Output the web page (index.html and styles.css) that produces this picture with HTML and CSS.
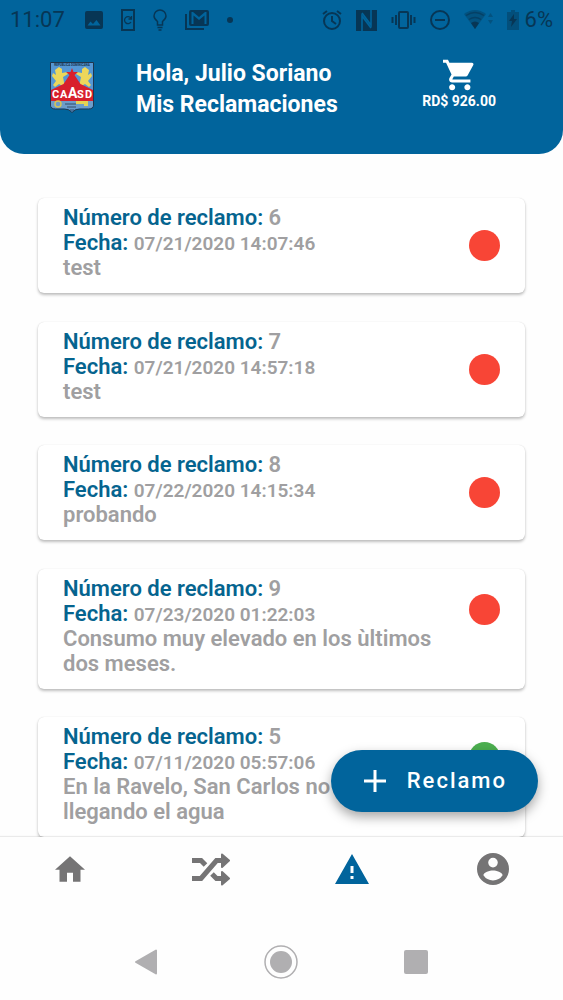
FILE: index.html
```html
<!DOCTYPE html>
<html lang="es">
<head>
<meta charset="utf-8">
<meta name="viewport" content="width=device-width, initial-scale=1">
<title>Mis Reclamaciones</title>
<link rel="stylesheet" href="styles.css">
</head>
<body>
<div class="app">
  <header class="header">
    <div class="status">
      <span class="status-text">11:07</span>
      <div class="status-icons status-left">
        <svg width="18" height="18" viewBox="0 0 18 18"><path fill="currentColor" fill-rule="evenodd" d="M2 0h14q2 0 2 2v14q0 2-2 2H2q-2 0-2-2V2Q0 0 2 0zM2.500 14.500h13L11.500 9l-3.500 4-2.500-2.500z"/></svg>
        <svg width="14" height="22" viewBox="0 0 14 22" fill="none" stroke="currentColor"><path stroke-width="2" d="M1 1h12v20H1z"/><path stroke-width="1.300" d="M9.800 9A3.500 3.500 0 1 0 10 13M10.500 7v3h-3"/></svg>
        <svg width="14" height="22" viewBox="0 0 14 22" fill="none" stroke="currentColor" stroke-width="1.500"><path d="M4.500 16v-3.500C2 10.500 1 9 1 7a6 6 0 0 1 12 0c0 2-1 3.500-3.500 5.500V16zM4.500 18.500h5M5.500 21h3"/></svg>
        <svg width="24" height="20" viewBox="0 0 24 20"><path fill="none" stroke="currentColor" stroke-width="2" d="M1 4v15h18"/><path fill="currentColor" fill-rule="evenodd" d="M6 0h16q2 0 2 2v12q0 2-2 2H6q-2 0-2-2V2Q4 0 6 0zM6.500 14h2V5.500L14 10l5.500-4.500V14h2V2H20l-6 5-6-5H6.500z"/></svg>
        <svg width="6" height="6" viewBox="0 0 6 6"><circle cx="3" cy="3" r="3" fill="currentColor"/></svg>
      </div>
      <div class="status-icons status-right">
        <svg width="20" height="20" viewBox="0 0 20 20" fill="none" stroke="currentColor" stroke-width="2"><circle cx="10" cy="11" r="8"/><path d="M1 4l4-3M19 4l-4-3M10 6v5l4 3"/></svg>
        <svg width="21" height="21" viewBox="0 0 21 21"><path fill="currentColor" d="M0 0h21v21H0z"/><path class="nfc-line" fill="none" stroke-width="1.600" d="M6 21V6l9 12M15 0v15L6 3"/></svg>
        <svg width="25" height="18" viewBox="0 0 25 18" fill="none" stroke="currentColor" stroke-width="2"><rect x="8" y="1" width="9" height="16" rx="1"/><path d="M5 4v10M1.500 6v6M20 4v10M23.500 6v6"/></svg>
        <svg width="20" height="20" viewBox="0 0 20 20" fill="none" stroke="currentColor" stroke-width="2"><circle cx="10" cy="10" r="9"/><path d="M5 10h10"/></svg>
        <svg width="29" height="20" viewBox="0 0 29 20" fill="currentColor"><path opacity=".4" d="M0 4q11-8 22 0L11 19z"/><path d="M7 13q4-3 8 0l-4 6z"/><path fill="none" stroke="currentColor" opacity=".6" stroke-width="1.500" d="M2 5.500q9-6 18 0M5 9.500q6-4 12 0"/><path opacity=".4" d="M24 7l2.500-4L29 7zM24 10h5l-2.500 4z"/></svg>
        <svg width="12" height="20" viewBox="0 0 12 20"><path fill="currentColor" opacity=".45" d="M0 2h4V0h4v2h4v18H0z"/><path fill="currentColor" d="M7 4l-5 7h3l-1 6 6-8H7z"/></svg>
      </div>
      <span class="status-text">6%</span>
    </div>
    <div class="hero">
      <svg class="crest" viewBox="0 0 44 51" role="img" aria-label="CAASD">
        <path fill="#5597d5" stroke="#20364d" d="M.5.500h43V43q0 4-5 4h-9q-5 0-7.500 3.500Q19.500 47 14.500 47h-9q-5 0-5-4z"/>
        <path fill="#ecd75b" d="M5 8l4-3 3 2v4l5-1 1 2-5 3 1 5 1 3-1 2-5-3-4 3-2-2 3-4-4-5 1-3 3 2zM39 8l-4-3-3 2v4l-5-1-1 2 5 3-1 5-1 3 1 2 5-3 4 3 2-2-3-4 4-5-1-3-3 2z"/>
        <path fill="#d8202c" d="M22 6l1.500 4H28l-3.500 3 6 9 12.500 6v11H1V28l12.500-6 6-9L16 10h4.500z"/>
        <path fill="#6d9dca" d="M1 39h42v4q0 3-5 3h-9q-5 0-7 3-2-3-7-3H6q-5 0-5-3z"/>
        <circle cx="8" cy="42" r="3" fill="none" stroke="#d6c457" stroke-width="1.500"/>
        <path fill="#e4d353" d="M26 39h12v5h-4v-2h-8z"/>
        <path stroke="#334c69" d="M15 42h11M17 45h9M20 48h4"/>
        <text class="crest-country" x="22" y="4" text-anchor="middle">REPUBLICA DOMINICANA</text>
        <text class="crest-name" y="36"><tspan x="2">C</tspan><tspan x="10">A</tspan><tspan class="crest-mid" x="18">A</tspan><tspan x="27">S</tspan><tspan x="35">D</tspan></text>
      </svg>
      <h1 class="greeting">Hola, Julio Soriano<br>Mis Reclamaciones</h1>
      <button class="cart" type="button">
        <svg class="cart-icon" viewBox="1 2 21 20" fill="currentColor" aria-hidden="true"><path d="M7 18c-1.100 0-1.990.9-1.990 2S5.900 22 7 22s2-.9 2-2-.9-2-2-2zM1 2v2h2l3.600 7.590-1.350 2.450c-.16.280-.25.610-.25.960 0 1.100.9 2 2 2h12v-2H7.420c-.14 0-.25-.11-.25-.25l.03-.12.900-1.630h7.450c.75 0 1.410-.41 1.750-1.030l3.580-6.490A1 1 0 0 0 20 4H5.210l-.94-2zm16 16c-1.100 0-1.990.9-1.990 2s.89 2 1.990 2 2-.9 2-2-.9-2-2-2z"/></svg>
        <span>RD$ 926.00</span>
      </button>
    </div>
  </header>

  <main class="claims">
    <article class="card">
      <div class="card-text"><p><b>Número de reclamo:</b> 6</p><p><b>Fecha:</b> <time>07/21/2020 14:07:46</time></p><p>test</p></div>
      <span class="dot"></span>
    </article>
    <article class="card">
      <div class="card-text"><p><b>Número de reclamo:</b> 7</p><p><b>Fecha:</b> <time>07/21/2020 14:57:18</time></p><p>test</p></div>
      <span class="dot"></span>
    </article>
    <article class="card">
      <div class="card-text"><p><b>Número de reclamo:</b> 8</p><p><b>Fecha:</b> <time>07/22/2020 14:15:34</time></p><p>probando</p></div>
      <span class="dot"></span>
    </article>
    <article class="card card-tall">
      <div class="card-text"><p><b>Número de reclamo:</b> 9</p><p><b>Fecha:</b> <time>07/23/2020 01:22:03</time></p><p>Consumo muy elevado en los ùltimos dos meses.</p></div>
      <span class="dot"></span>
    </article>
    <article class="card card-tall">
      <div class="card-text"><p><b>Número de reclamo:</b> 5</p><p><b>Fecha:</b> <time>07/11/2020 05:57:06</time></p><p>En la Ravelo, San Carlos no esta llegando el agua</p></div>
      <span class="dot dot-green"></span>
    </article>
    <button class="fab" type="button">
      <svg width="22" height="22" viewBox="0 0 22 22" aria-hidden="true"><path stroke="currentColor" stroke-width="3" d="M11 0v22M0 11h22"/></svg>
      <span>Reclamo</span>
    </button>
  </main>

  <nav class="tabs">
    <a class="tab" href="#inicio" aria-label="Inicio"><svg width="30" height="26" viewBox="2 3 20 17" fill="currentColor"><path d="M10 20v-6h4v6h5v-8h3L12 3 2 12h3v8z"/></svg></a>
    <a class="tab" href="#movimientos" aria-label="Movimientos"><svg width="38" height="33" viewBox="0 0 38 33" fill="none" stroke="currentColor" stroke-width="5"><path d="M0 7.500h9l4.500 4.500M20 21l4.500 4.500H30M0 25.500h9L24.500 7.500H30"/><path fill="currentColor" stroke-width="2" stroke-linejoin="round" d="M30 1.500l7 6-7 6.500zM30 19l7 6.500-7 6z"/></svg></a>
    <a class="tab tab-active" href="#reclamos" aria-label="Reclamaciones" aria-current="page"><svg width="34" height="30" viewBox="0 0 34 30" fill="currentColor"><path fill-rule="evenodd" d="M17 0l17 30H0zM15.500 12v7h3v-7zM15.500 22v3h3v-3z"/></svg></a>
    <a class="tab" href="#perfil" aria-label="Perfil"><svg width="32" height="32" viewBox="2 2 20 20" fill="currentColor"><path fill-rule="evenodd" d="M12 2a10 10 0 1 0 0 20 10 10 0 0 0 0-20zm0 3a3 3 0 1 1 0 6 3 3 0 0 1 0-6zm0 14.200a7.200 7.200 0 0 1-6-3.220c.03-1.990 4-3.080 6-3.080s5.970 1.090 6 3.080a7.200 7.200 0 0 1-6 3.220z"/></svg></a>
  </nav>

  <div class="system">
    <button class="key" type="button" aria-label="Atrás"><svg width="22" height="26" viewBox="0 0 22 26"><path fill="currentColor" stroke="currentColor" stroke-width="2" stroke-linejoin="round" d="M21 1.500v23L1 13z"/></svg></button>
    <button class="key" type="button" aria-label="Inicio del teléfono"><svg width="34" height="34" viewBox="0 0 34 34"><circle cx="17" cy="17" r="16" fill="none" stroke="currentColor" stroke-width="1.500"/><circle cx="17" cy="17" r="11" fill="currentColor"/></svg></button>
    <button class="key" type="button" aria-label="Recientes"><svg width="24" height="24" viewBox="0 0 24 24"><rect width="24" height="24" rx="2" fill="currentColor"/></svg></button>
  </div>
</div>
</body>
</html>
```

FILE: styles.css
```css
* { box-sizing: border-box; }
body {
  margin: 0;
  background: #fefefe;
  font-family: Roboto, "Liberation Sans", sans-serif;
}
h1, p { margin: 0; }
button {
  border: 0;
  padding: 0;
  background: none;
  font: inherit;
  color: inherit;
}
svg { display: block; flex: none; }

.app {
  display: flex;
  flex-direction: column;
  height: 100vh;
}

.header {
  flex: none;
  padding-bottom: 38px;
  background: #01649c;
  border-radius: 0 0 24px 24px;
  color: #fff;
}
.status {
  display: flex;
  align-items: center;
  height: 40px;
  padding: 0 10px;
  color: #073655;
}
.status-text { font-size: 22px; line-height: 26px; }
.status-icons { display: flex; align-items: center; }
.status-left { gap: 18px; margin-left: 20px; }
.status-right { gap: 14px; margin-left: auto; margin-right: 6px; }
.nfc-line { stroke: #01649c; }

.hero {
  display: flex;
  align-items: center;
  height: 76px;
  padding: 0 67px 0 50px;
}
.crest { width: 44px; height: 51px; margin-top: 18px; }
.crest-country { font-size: 3px; font-weight: 700; fill: #16324c; }
.crest-name { font-size: 11px; font-weight: 700; fill: #fff; }
.crest-mid { font-size: 14px; }
.greeting {
  margin: 22px auto 0 42px;
  font-size: 23px;
  line-height: 31px;
  font-weight: 700;
  white-space: nowrap;
}
.cart {
  display: flex;
  flex-direction: column;
  align-items: center;
  gap: 1px;
  margin-top: 12px;
  font-size: 14px;
  line-height: 18px;
  font-weight: 700;
}
.cart-icon { width: 32px; height: 32px; }

.claims {
  position: relative;
  flex: 1;
  min-height: 0;
  display: flex;
  flex-direction: column;
  justify-content: space-between;
  padding: 44px 38px 0;
}
.card {
  flex: none;
  display: flex;
  align-items: center;
  justify-content: space-between;
  gap: 24px;
  padding: 7px 25px 13px;
  background: #fff;
  border-radius: 6px;
  box-shadow: 0 2px 3px rgba(0, 0, 0, 0.25), 0 0 1px rgba(0, 0, 0, 0.15);
  color: #a09fa1;
  font-size: 22px;
  line-height: 25px;
  font-weight: 600;
}
.card b { color: #05648f; font-weight: 600; }
.card time { font-size: 19px; line-height: 1; }
.card-text { flex: 1; }
.dot {
  flex: none;
  width: 31px;
  height: 31px;
  margin-top: 6px;
  border-radius: 50%;
  background: #f84536;
}
.dot-green { background: #4caf50; }
.card-tall { align-items: flex-start; }
.card-tall .dot { margin-top: 18px; }

.fab {
  position: absolute;
  right: 25px;
  bottom: 25px;
  display: flex;
  align-items: center;
  gap: 21px;
  padding: 16px 31px 16px 33px;
  border-radius: 31px;
  background: #01649c;
  box-shadow: 0 5px 12px rgba(0, 0, 0, 0.35);
  color: #fff;
  font-size: 22px;
  line-height: 30px;
  font-weight: 500;
  letter-spacing: 2px;
}

.tabs {
  flex: none;
  position: relative;
  display: flex;
  height: 87px;
  padding-bottom: 23px;
  background: #fefefe;
  box-shadow: 0 -1px 1px rgba(0, 0, 0, 0.08);
}
.tab {
  flex: 1;
  display: flex;
  align-items: center;
  justify-content: center;
  color: #757475;
}
.tab-active { color: #01649c; }

.system {
  flex: none;
  display: flex;
  align-items: center;
  justify-content: space-between;
  height: 76px;
  padding: 0 135px;
  color: #b0afb1;
}
```
